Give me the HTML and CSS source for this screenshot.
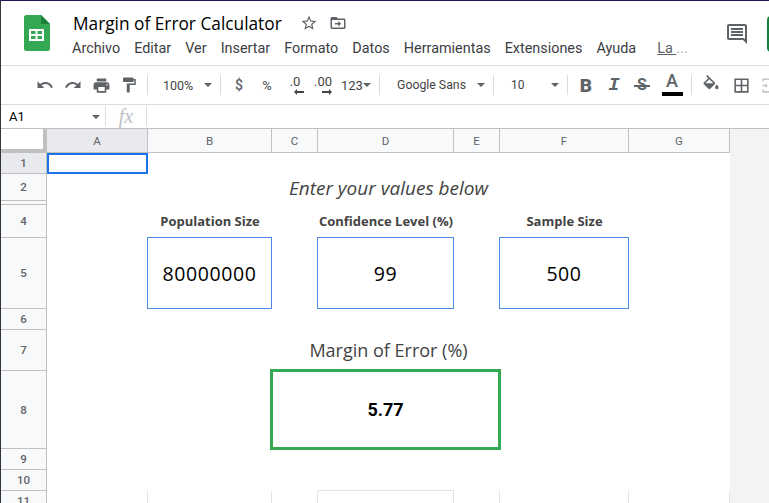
FILE: index.html
```html
<!DOCTYPE html>
<html lang="es">
<head>
    <meta charset="UTF-8">
    <meta name="viewport" content="width=device-width, initial-scale=1.0">
    <title>Margin of Error Calculator</title>
    <link rel="stylesheet" href="styles.css">
</head>
<body>
    <div class="app">

        <!-- title and menus -->
        <header class="header">
            <svg class="logo" viewBox="0 0 26 36" width="26" height="36">
                <path fill="#34a853" d="M2.5 0H17l9 9v24.5a2.5 2.5 0 0 1-2.500 2.500h-21a2.500 2.500 0 0 1-2.500-2.500v-31a2.500 2.500 0 0 1 2.500-2.500z"/>
                <path fill="#188038" d="M17 0l9 9h-9z"/>
                <path fill="#fff" d="M5 14h15v12h-15zM7 16v3h4.500v-3zM13.500 16v3h4.500v-3zM7 21v3h4.500v-3zM13.500 21v3h4.500v-3z" fill-rule="evenodd"/>
            </svg>
            <div class="doc-info">
                <div class="title-row">
                    <span class="doc-title">Margin of Error Calculator</span>
                    <svg class="title-icon" viewBox="0 0 24 24" width="18" height="18"><path d="M22 9.240l-7.190-.620L12 2 9.190 8.630 2 9.240l5.460 4.730L5.820 21 12 17.270 18.180 21l-1.630-7.030L22 9.240zM12 15.400l-3.760 2.270 1-4.280-3.320-2.880 4.380-.380L12 6.100l1.710 4.040 4.380.380-3.320 2.880 1 4.280L12 15.400z"/></svg>
                    <svg class="title-icon" viewBox="0 0 24 24" width="18" height="18"><path d="M20 6h-8l-2-2H4c-1.100 0-2 .900-2 2v12c0 1.100.900 2 2 2h16c1.100 0 2-.900 2-2V8c0-1.100-.900-2-2-2zm0 12H4V8h16v10zM12.500 9l3.500 4-3.500 4v-3H8v-2h4.500z"/></svg>
                </div>
                <nav class="menu">
                    <span>Archivo</span>
                    <span>Editar</span>
                    <span>Ver</span>
                    <span>Insertar</span>
                    <span>Formato</span>
                    <span>Datos</span>
                    <span>Herramientas</span>
                    <span>Extensiones</span>
                    <span>Ayuda</span>
                    <span class="last-edit"><u>La&nbsp;</u><i>...</i></span>
                </nav>
            </div>
            <svg class="comment-icon" viewBox="0 0 24 24" width="24" height="24"><path d="M21.990 4c0-1.100-.890-2-1.990-2H4c-1.100 0-2 .900-2 2v12c0 1.100.900 2 2 2h14l4 4-.010-18zM20 4v13.170L18.830 16H4V4h16zM6 12h12v2H6zm0-3h12v2H6zm0-3h12v2H6z"/></svg>
            <div class="share"></div>
        </header>

        <!-- toolbar -->
        <div class="toolbar">
            <div class="tool"><svg viewBox="0 0 24 24" width="18" height="18"><path d="M12.500 8c-2.650 0-5.050.990-6.900 2.600L2 7v9h9l-3.620-3.620c1.390-1.160 3.160-1.880 5.120-1.880 3.540 0 6.550 2.310 7.600 5.500l2.370-.780C21.080 11.030 17.150 8 12.500 8z"/></svg></div>
            <div class="tool"><svg viewBox="0 0 24 24" width="18" height="18"><path d="M18.400 10.600C16.550 8.990 14.150 8 11.500 8c-4.650 0-8.580 3.030-9.960 7.220L3.900 16c1.050-3.190 4.050-5.500 7.600-5.500 1.950 0 3.730.720 5.120 1.880L13 16h9V7l-3.600 3.600z"/></svg></div>
            <div class="tool"><svg viewBox="0 0 24 24" width="19" height="19"><path d="M19 8H5c-1.660 0-3 1.340-3 3v6h4v4h12v-4h4v-6c0-1.660-1.340-3-3-3zm-3 11H8v-5h8v5zm3-7c-.550 0-1-.450-1-1s.450-1 1-1 1 .450 1 1-.450 1-1 1zm-1-9H6v4h12V3z"/></svg></div>
            <div class="tool"><svg viewBox="0 0 24 24" width="18" height="18"><path d="M18 4V3c0-.550-.450-1-1-1H5c-.550 0-1 .450-1 1v4c0 .550.450 1 1 1h12c.550 0 1-.450 1-1V6h1v4H9v11c0 .550.450 1 1 1h2c.550 0 1-.450 1-1v-9h8V4h-3z"/></svg></div>
            <div class="sep"></div>
            <div class="select zoom-select"><span>100%</span><i class="caret"></i></div>
            <div class="sep"></div>
            <div class="tool tool-text">$</div>
            <div class="tool tool-text tool-small">%</div>
            <div class="tool decimal"><span>.0</span><svg viewBox="0 0 10 6" width="10" height="6"><path d="M0 3l3-3v2h7v2H3v2z"/></svg></div>
            <div class="tool decimal"><span>.00</span><svg viewBox="0 0 10 6" width="10" height="6"><path d="M10 3L7 0v2H0v2h7v2z"/></svg></div>
            <div class="select format-select"><span>123</span><i class="caret"></i></div>
            <div class="sep"></div>
            <div class="select font-select"><span>Google Sans</span><i class="caret"></i></div>
            <div class="sep"></div>
            <div class="select size-select"><span>10</span><i class="caret"></i></div>
            <div class="sep"></div>
            <div class="tool fmt fmt-bold">B</div>
            <div class="tool fmt fmt-italic">I</div>
            <div class="tool fmt fmt-strike"><span>S</span></div>
            <div class="tool fmt fmt-color"><span>A</span><i class="color-bar"></i></div>
            <div class="sep sep-wide"></div>
            <div class="tool"><svg viewBox="0 0 24 24" width="20" height="20"><path d="M16.560 8.940L7.620 0 6.210 1.410l2.380 2.380-5.150 5.150c-.590.590-.590 1.540 0 2.120l5.500 5.500c.290.290.680.440 1.060.440s.770-.150 1.060-.440l5.500-5.500c.590-.580.590-1.530 0-2.120zM5.210 10L10 5.210 14.790 10H5.210zM19 11.500s-2 2.170-2 3.500c0 1.100.900 2 2 2s2-.900 2-2c0-1.330-2-3.500-2-3.500z"/></svg></div>
            <div class="tool tool-borders"><svg viewBox="0 0 24 24" width="19" height="19"><path d="M3 3v18h18V3H3zm8 16H5v-6h6v6zm0-8H5V5h6v6zm8 8h-6v-6h6v6zm0-8h-6V5h6v6z"/></svg></div>
            <div class="tool tool-off"><svg viewBox="0 0 24 24" width="19" height="19"><path d="M3 3h18v4h-2V5H5v2H3zM3 17h2v2h14v-2h2v4H3zM3 11h4V9l3 3-3 3v-2H3zM21 11h-4V9l-3 3 3 3v-2h4z"/></svg></div>
        </div>

        <!-- formula bar -->
        <div class="formula-bar">
            <div class="name-box"><span>A1</span><i class="caret"></i></div>
            <div class="fx">fx</div>
            <div class="formula-input"></div>
        </div>

        <!-- sheet -->
        <div class="sheet">
            <div class="corner"></div>
            <div class="col-head selected">A</div>
            <div class="col-head">B</div>
            <div class="col-head">C</div>
            <div class="col-head">D</div>
            <div class="col-head">E</div>
            <div class="col-head">F</div>
            <div class="col-head">G</div>

            <div class="row-head row-1 selected">1</div>
            <div class="active-cell row-1"></div>

            <div class="row-head row-2">2</div>
            <div class="sheet-title row-2">Enter your values below</div>

            <div class="row-head row-3"></div>

            <div class="row-head row-4">4</div>
            <div class="label col-b row-4">Population Size</div>
            <div class="label col-d row-4">Confidence Level (%)</div>
            <div class="label col-f row-4">Sample Size</div>

            <div class="row-head row-5">5</div>
            <div class="input-box col-b row-5">80000000</div>
            <div class="input-box col-d row-5">99</div>
            <div class="input-box col-f row-5">500</div>

            <div class="row-head row-6">6</div>

            <div class="row-head row-7">7</div>
            <div class="result-label row-7">Margin of Error (%)</div>

            <div class="row-head row-8">8</div>
            <div class="result-box row-8">5.77</div>

            <div class="row-head row-9">9</div>
            <div class="row-head row-10">10</div>

            <div class="row-head row-11">11</div>
            <div class="line-cell row-11"></div>
            <div class="line-cell row-11"></div>
            <div class="line-cell row-11"></div>
            <div class="line-cell line-top row-11"></div>
            <div class="line-cell row-11"></div>
            <div class="line-cell row-11"></div>
            <div class="line-cell row-11"></div>
        </div>
    </div>
</body>
</html>
```

FILE: styles.css
```css
* {
    box-sizing: border-box;
}

html, body {
    margin: 0;
    height: 100%;
    overflow: hidden;
}

body {
    font-family: Roboto, sans-serif;
    background-color: #fff;
}

.app {
    height: 503px;
    width: 769px;
    overflow: hidden;
    border-top: 1px solid #2a1258;
    border-left: 1px solid #33363a;
    display: flex;
    flex-direction: column;
}

/* header */
.header {
    height: 65px;
    flex-shrink: 0;
    border-bottom: 1px solid #dadce0;
    display: flex;
    position: relative;
}

.logo {
    margin: 14px 0 0 23px;
}

.doc-info {
    margin-left: 23px;
}

.title-row {
    display: flex;
    align-items: center;
    height: 24px;
    margin-top: 10px;
}

.doc-title {
    font-family: "Open Sans", sans-serif;
    font-size: 17.300px;
    color: #000;
    margin-right: 18px;
    white-space: nowrap;
}

.title-icon {
    fill: #5f6368;
    margin-right: 11px;
}

.menu {
    display: flex;
    gap: 14px;
    margin-top: 4px;
    margin-left: -1px;
    font-size: 14.400px;
    line-height: 20px;
    color: #3c4043;
    white-space: nowrap;
}

.last-edit {
    margin-left: 7px;
    color: #5f6368;
}

.last-edit i {
    font-style: normal;
    color: #9aa0a6;
}

.comment-icon {
    position: absolute;
    left: 724px;
    top: 21px;
    width: 24px;
    fill: #5f6368;
}

.share {
    position: absolute;
    left: 766px;
    top: 15px;
    width: 20px;
    height: 36px;
    border-radius: 4px;
    background-color: #188038;
}

/* toolbar */
.toolbar {
    height: 39px;
    flex-shrink: 0;
    border-bottom: 1px solid #dadce0;
    padding-left: 30px;
    display: flex;
    align-items: center;
    color: #5f6368;
    font-size: 12px;
}

.tool {
    width: 28px;
    height: 28px;
    flex-shrink: 0;
    display: flex;
    align-items: center;
    justify-content: center;
}

.tool svg {
    fill: #5f6368;
}

.tool-off svg {
    fill: #c4c7c9;
}

.tool-borders {
    margin-left: 2px;
}

.tool-text {
    font-size: 14px;
    font-weight: 500;
}

.tool-small {
    font-size: 13px;
}

.sep {
    width: 1px;
    height: 20px;
    margin: 0 4px;
    flex-shrink: 0;
    background-color: #dadce0;
}

.sep-wide {
    margin: 0 5px 0 5px;
}

.select {
    height: 28px;
    flex-shrink: 0;
    display: flex;
    align-items: center;
    justify-content: space-between;
    color: #444;
}

.zoom-select {
    width: 64px;
    padding: 0 4px 0 11px;
    font-size: 12.500px;
}

.format-select {
    width: 38px;
    padding-left: 4px;
    font-size: 13px;
}

.format-select .caret {
    margin-right: 4px;
}

.font-select {
    width: 105px;
    padding: 0 4px 0 13px;
    font-size: 12.300px;
}

.size-select {
    width: 65px;
    padding: 0 4px 0 13px;
}

.caret {
    width: 0;
    height: 0;
    border-left: 4px solid transparent;
    border-right: 4px solid transparent;
    border-top: 4px solid #5f6368;
}

.decimal {
    flex-direction: column;
    line-height: 12px;
    font-size: 13px;
    font-weight: 400;
    color: #444;
}

.decimal svg {
    display: block;
    margin-top: 1px;
    margin-left: 8px;
    fill: #444;
}

.fmt-bold {
    font-size: 19px;
    font-weight: 900;
}

.fmt-italic {
    font-family: "Liberation Mono", monospace;
    font-size: 19px;
    font-weight: 700;
    font-style: italic;
}

.fmt-strike {
    font-size: 16px;
    font-weight: 700;
}

.fmt-strike span {
    position: relative;
    display: block;
    line-height: 18px;
}

/* the strike line runs wider than the letter */
.fmt-strike span::after {
    content: "";
    position: absolute;
    left: -3px;
    right: -3px;
    top: 9px;
    height: 2px;
    background-color: #5f6368;
}

.fmt-color {
    flex-direction: column;
    justify-content: flex-start;
    font-size: 18px;
    font-weight: 500;
    line-height: 20px;
    width: 28px;
    margin-left: 2px;
    padding-top: 0;
}

.color-bar {
    display: block;
    width: 21px;
    height: 4px;
    margin-top: 1px;
    background-color: #000;
}

/* formula bar */
.formula-bar {
    height: 24px;
    flex-shrink: 0;
    border-bottom: 1px solid #c0c0c0;
    display: flex;
    align-items: stretch;
}

.name-box {
    width: 104px;
    padding: 0 5px 0 8px;
    display: flex;
    align-items: center;
    justify-content: space-between;
    font-size: 13px;
    color: #000;
}

.fx {
    width: 42px;
    margin: 1px 0 2px;
    border-left: 1px solid #dadce0;
    border-right: 1px solid #dadce0;
    text-align: center;
    font-family: "Liberation Serif", serif;
    font-style: italic;
    font-size: 20px;
    line-height: 21px;
    color: #bdc1c6;
}

.formula-input {
    flex-grow: 1;
}

/* sheet grid */
.sheet {
    flex-grow: 1;
    display: grid;
    grid-template-columns: 46px 101px 124px 46px 136px 46px 129px 101px 39px;
    grid-template-rows: 24px 21px 27px 4px 33px 71px 21px 41px 78px 21px 21px 21px;
    background:
        linear-gradient(#fff, #fff) no-repeat 0 0 / 729px 100%,
        #f3f3f3;
    font-family: Roboto, sans-serif;
}

.corner {
    background-color: #fff;
    border-right: 4px solid #c0c0c0;
    border-bottom: 4px solid #c0c0c0;
    box-shadow: 1px 0 0 #c0c0c0;
}

.col-head, .row-head {
    background-color: #f8f9fa;
    border-right: 1px solid #c0c0c0;
    border-bottom: 1px solid #c0c0c0;
    display: flex;
    align-items: center;
    justify-content: center;
    font-size: 11.500px;
    color: #5f6368;
}

.row-head {
    grid-column: 1;
    font-weight: 500;
}

.col-head.selected, .row-head.selected {
    background-color: #e8eaed;
}

.row-1 { grid-row: 2; }
.row-2 { grid-row: 3; }
.row-3 { grid-row: 4; }
.row-4 { grid-row: 5; }
.row-5 { grid-row: 6; }
.row-6 { grid-row: 7; }
.row-7 { grid-row: 8; }
.row-8 { grid-row: 9; }
.row-9 { grid-row: 10; }
.row-10 { grid-row: 11; }
.row-11 { grid-row: 12; }

.col-b { grid-column: 3; }
.col-d { grid-column: 5; }
.col-f { grid-column: 7; }

.active-cell {
    grid-column: 2;
    border: 2px solid #1a73e8;
}

.sheet-title, .label, .input-box, .result-label, .result-box {
    display: flex;
    align-items: center;
    justify-content: center;
    white-space: nowrap;
    font-family: "Open Sans", sans-serif;
}

.sheet-title {
    grid-column: 3 / 8;
    font-size: 19px;
    font-style: italic;
    color: #434343;
}

.label {
    font-size: 13px;
    font-weight: 700;
    color: #434343;
    margin: 0 -10px;
    padding-bottom: 2px;
}

.input-box {
    border: 1px solid #4a86e8;
    margin: -1px 0 0 -1px;
    font-size: 19.500px;
    letter-spacing: .6px;
    color: #000;
}

.result-label {
    grid-column: 4 / 7;
    font-size: 18px;
    color: #434343;
    margin: 0 -20px;
    padding-left: 5px;
    padding-bottom: 2px;
}

.result-box {
    grid-column: 4 / 7;
    border: 3px solid #34a853;
    margin: -2px -1px -1px -2px;
    font-family: Roboto, sans-serif;
    font-size: 18px;
    font-weight: 700;
    color: #000;
}

.line-cell {
    border-right: 1px solid #e2e3e3;
}

.line-top {
    border-top: 1px solid #e2e3e3;
    margin-top: -1px;
}
```
